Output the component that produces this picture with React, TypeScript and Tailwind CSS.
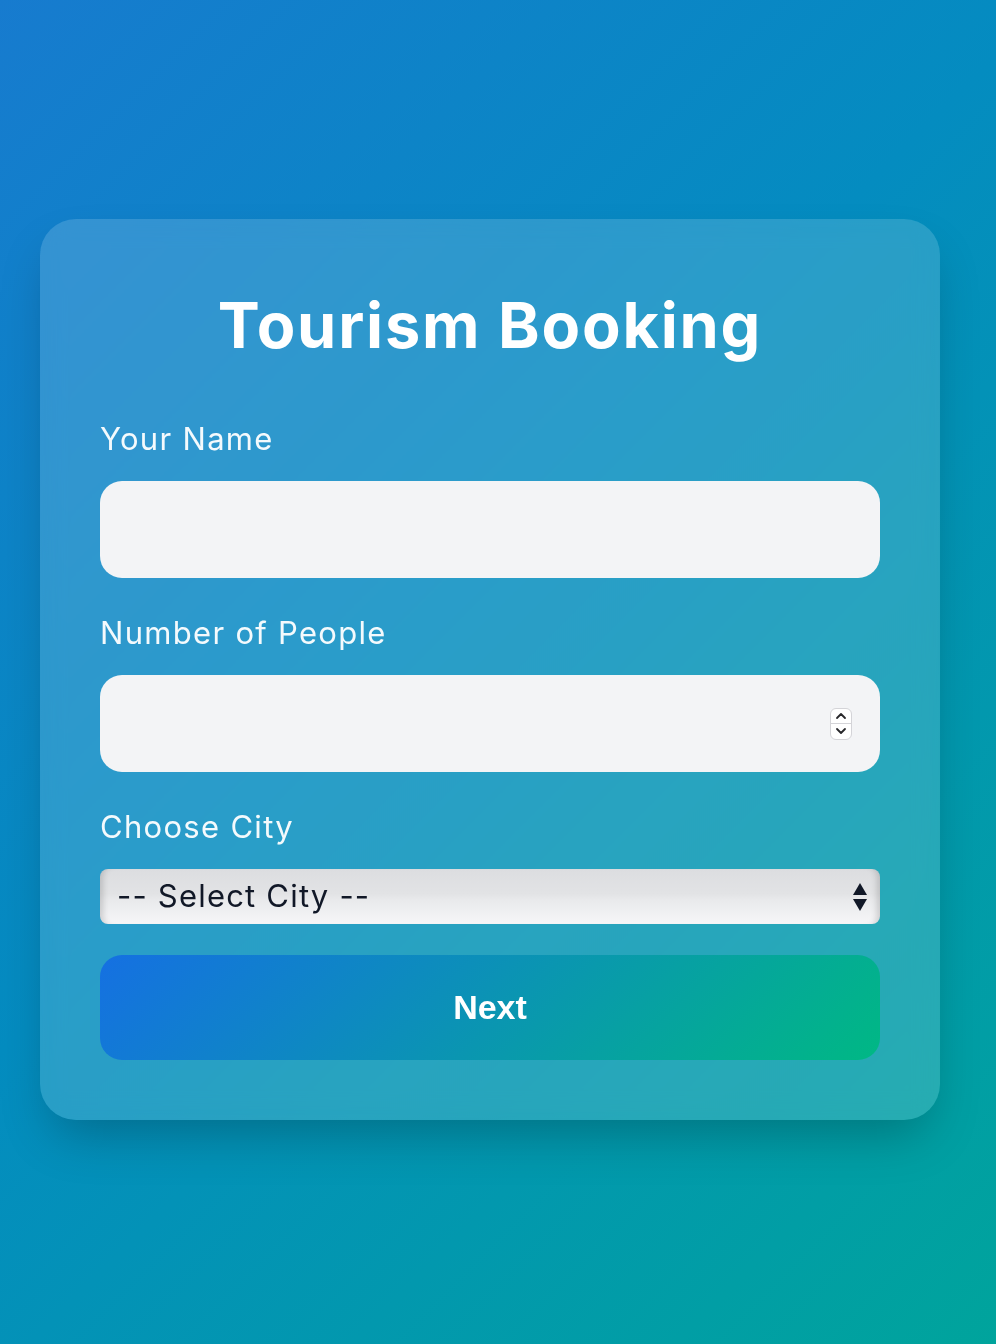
import { useState } from "react";

const cities = ["Paris", "Rome", "Tokyo", "New York", "Bali"];

const Spinner = () => (
    <div className="flex flex-col w-[22px] h-[32px] rounded-[6px] bg-white border border-[#d4d4d8] overflow-hidden shrink-0">
        <div className="flex-1 flex items-center justify-center border-b border-[#d4d4d8]">
            <svg width="12" height="8" viewBox="0 0 12 8" fill="none">
                <path d="M2 6 L6 2 L10 6" stroke="#27272a" strokeWidth="1.8" strokeLinecap="round" strokeLinejoin="round" />
            </svg>
        </div>
        <div className="flex-1 flex items-center justify-center">
            <svg width="12" height="8" viewBox="0 0 12 8" fill="none">
                <path d="M2 2 L6 6 L10 2" stroke="#27272a" strokeWidth="1.8" strokeLinecap="round" strokeLinejoin="round" />
            </svg>
        </div>
    </div>
);

const App = () => {
    const [name, setName] = useState("");
    const [people, setPeople] = useState("");
    const [city, setCity] = useState("");

    return (
        <div
            className="min-h-screen pt-[219px] px-10 bg-[linear-gradient(135deg,#177bcf_0%,#048cc0_45%,#00a49c_100%)]"
            style={{ fontFamily: "Inter, 'Noto Sans', sans-serif" }}
        >
            <div className="w-[900px] rounded-[36px] bg-white/15 backdrop-blur-md shadow-2xl p-[60px]">
                <h1 className="text-center text-white font-bold text-[63px] leading-none mt-[15px] mb-[59px] tracking-[1.8px]">
                    Tourism Booking
                </h1>

                <form className="flex flex-col" onSubmit={(e) => e.preventDefault()}>
                    <label className="block text-white/95 text-[31px] leading-[45px] tracking-[1.3px] mb-5">Your Name</label>
                    <input
                        type="text"
                        value={name}
                        onChange={(e) => setName(e.target.value)}
                        className="h-[97px] w-full rounded-[22px] bg-[#f3f4f6] px-6 text-[30px] text-gray-900 outline-none"
                    />

                    <label className="block text-white/95 text-[31px] leading-[45px] tracking-[1.3px] mt-8 mb-5">Number of People</label>
                    <div className="h-[97px] w-full rounded-[22px] bg-[#f3f4f6] flex items-center pl-6 pr-[28px]">
                        <input
                            type="number"
                            min={1}
                            value={people}
                            onChange={(e) => setPeople(e.target.value)}
                            className="flex-1 min-w-0 bg-transparent text-[30px] text-gray-900 outline-none [appearance:textfield] [&::-webkit-inner-spin-button]:appearance-none [&::-webkit-outer-spin-button]:appearance-none"
                        />
                        <Spinner />
                    </div>

                    <label className="block text-white/95 text-[31px] leading-[45px] tracking-[1.3px] mt-8 mb-5">Choose City</label>
                    <div className="relative">
                        <select
                            value={city}
                            onChange={(e) => setCity(e.target.value)}
                            className="appearance-none w-full h-[55px] rounded-[8px] pl-[17px] pr-12 text-[31px] tracking-[1.2px] text-[#111827] outline-none bg-[linear-gradient(180deg,#dcdde0_0%,#e2e3e5_45%,#e8e9eb_55%,#f6f6f8_100%)] shadow-[inset_8px_0_6px_-5px_rgba(0,0,0,0.16),inset_-8px_0_6px_-5px_rgba(0,0,0,0.16)]"
                        >
                            <option value="">-- Select City --</option>
                            {cities.map((c) => (
                                <option key={c} value={c}>{c}</option>
                            ))}
                        </select>
                        <svg className="absolute right-[13px] top-[13px] pointer-events-none" width="14" height="30" viewBox="0 0 14 30">
                            <path d="M7 1 L14 13 L0 13 Z" fill="#111827" />
                            <path d="M0 17 L14 17 L7 29 Z" fill="#111827" />
                        </svg>
                    </div>

                    <button
                        type="submit"
                        className="mt-[31px] h-[105px] w-full rounded-[22px] text-white font-bold text-[34px] bg-[linear-gradient(135deg,#1570e2,#00b884)]"
                        style={{ fontFamily: "'Liberation Sans', Arial, sans-serif" }}
                    >
                        Next
                    </button>
                </form>
            </div>
        </div>
    );
};

export default App;
